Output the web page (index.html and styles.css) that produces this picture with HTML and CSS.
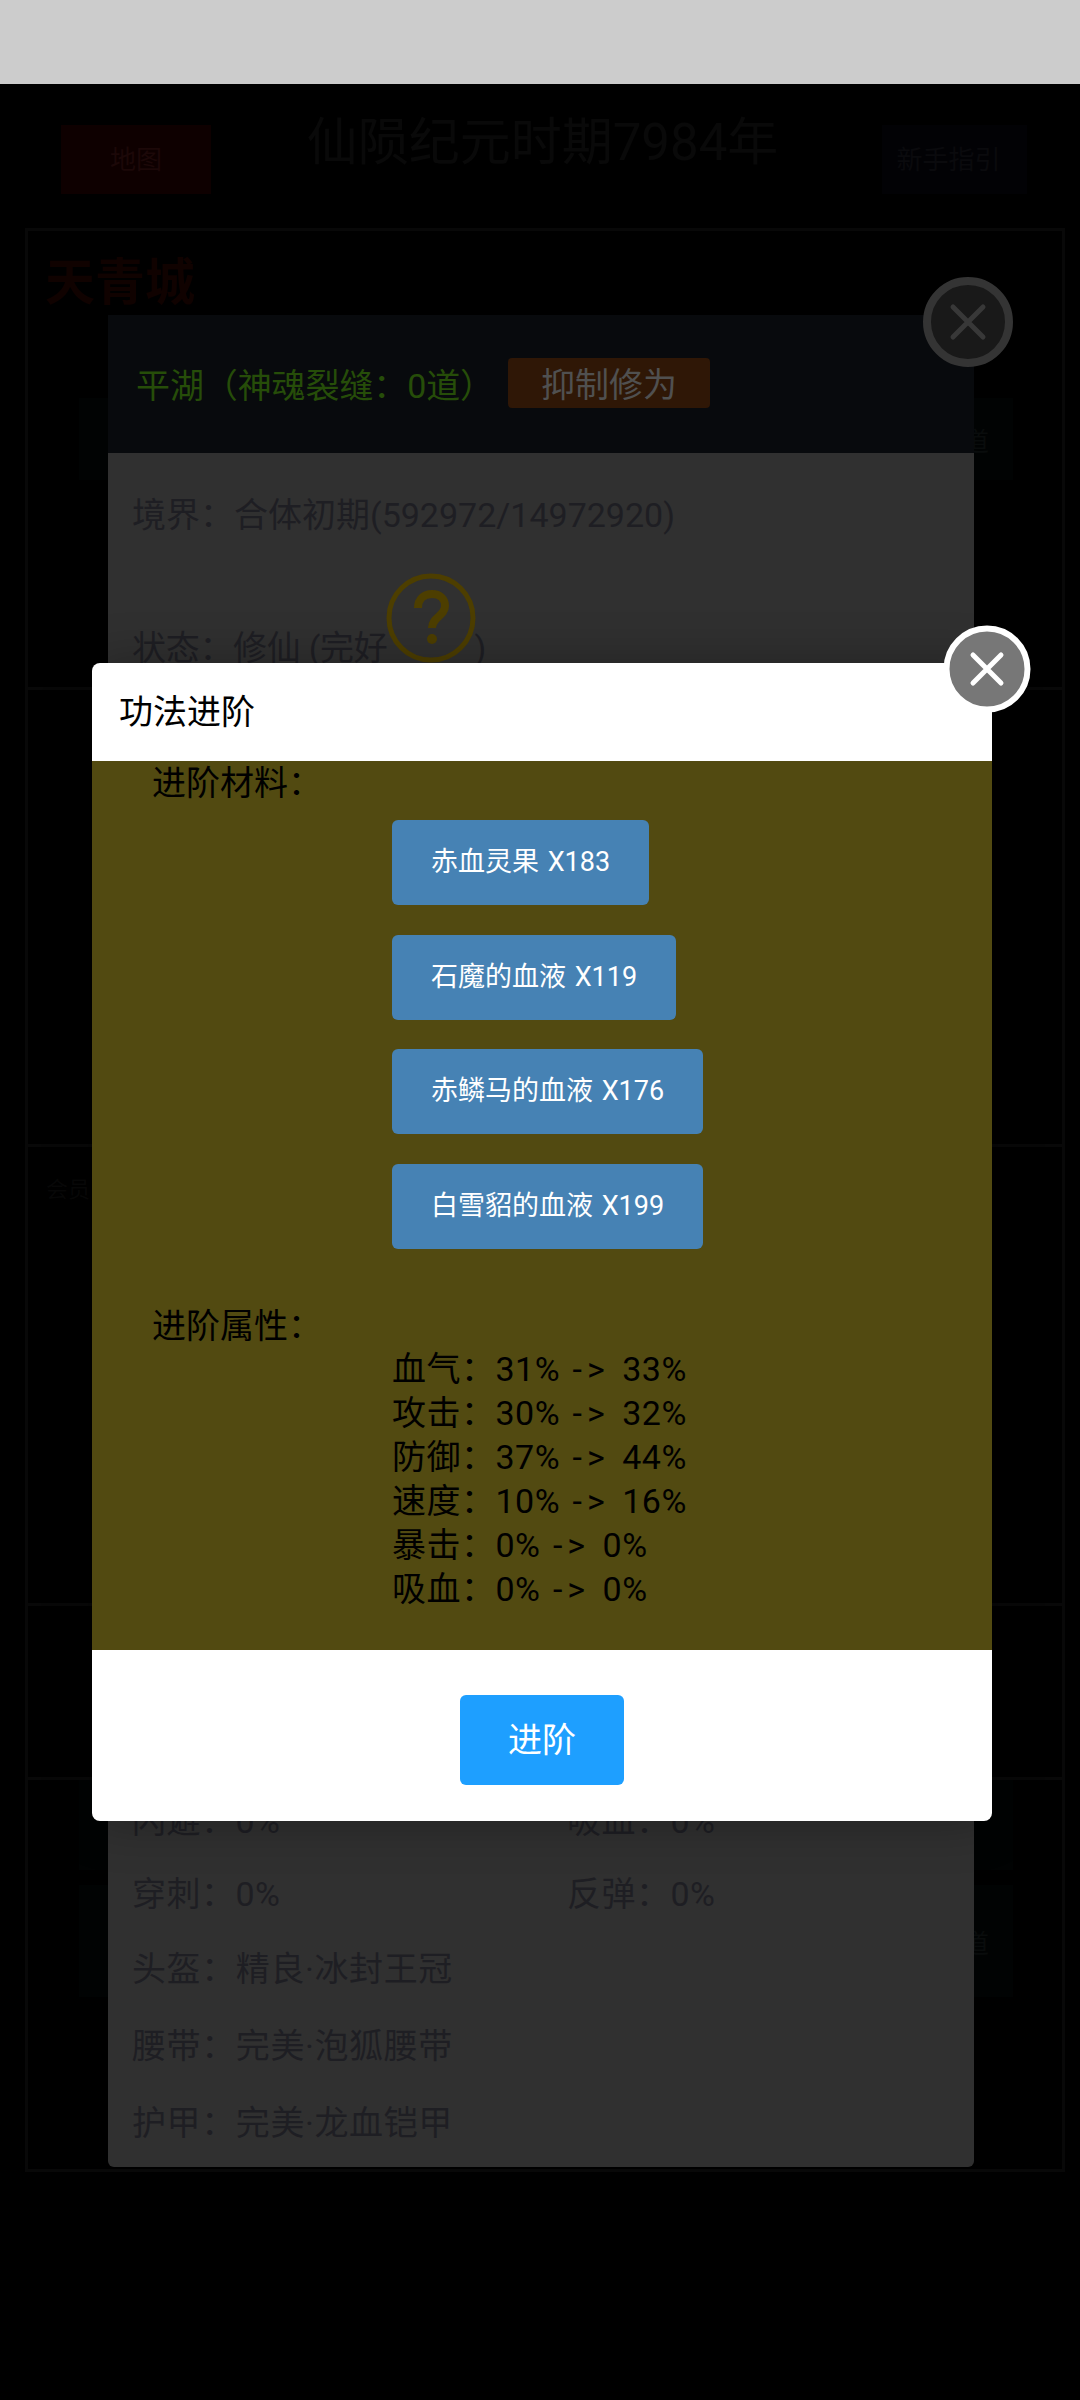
FILE: index.html
```html
<!DOCTYPE html>
<html>
  <head>
    <meta charset="utf-8">
    <title>功法进阶</title>
    <link rel="stylesheet" href="styles.css">
  </head>
  <body>
    <div class="statusbar"></div>

    <!-- Game page, dimmed by the popups -->
    <div class="topbar">
      <button class="map-btn">地图</button>
      <div class="era">仙陨纪元时期7984年</div>
      <button class="guide-btn">新手指引</button>
    </div>

    <div class="world">
      <section class="block block-city">
        <h2 class="city">天青城</h2>
        <div class="strip strip-first"><span>道</span></div>
      </section>
      <section class="block block-a"></section>
      <section class="block block-b"><p class="faint">会员</p></section>
      <section class="block block-c"></section>
      <section class="block block-d">
        <div class="strip strip-low"></div>
        <div class="strip strip-lower"><span>道</span></div>
      </section>
    </div>

    <!-- Character popup -->
    <div class="role">
      <div class="role-head">
        <span class="role-name">平湖（神魂裂缝：0道）</span>
        <button class="role-btn">抑制修为</button>
      </div>
      <div class="role-body">
        <div class="row row-first">境界：合体初期(592972/14972920)</div>
        <div class="row row-state">
          <span>状态：修仙 (完好</span>
          <svg class="help" viewBox="0 0 90 90">
            <circle cx="45" cy="45" r="42" fill="none" stroke="#4d3e00" stroke-width="5"/>
            <path d="M32 35c0-9 6-14 14-14s13 5 13 12c0 10-13 11-13 22" fill="none" stroke="#4d3e00" stroke-width="8"/>
            <circle cx="46" cy="66" r="5" fill="#4d3e00"/>
          </svg>
          <span>)</span>
        </div>
        <div class="pairs">
          <div class="row">闪避：0%</div>
          <div class="row">吸血：0%</div>
          <div class="row">穿刺：0%</div>
          <div class="row">反弹：0%</div>
        </div>
        <div class="row row-gear">头盔：精良·冰封王冠</div>
        <div class="row row-gear">腰带：完美·泡狐腰带</div>
        <div class="row row-gear">护甲：完美·龙血铠甲</div>
      </div>
      <svg class="role-close" viewBox="0 0 90 90">
        <circle cx="45" cy="45" r="41" fill="#191919" stroke="#343434" stroke-width="8"/>
        <path d="M30 30l30 30M60 30L30 60" stroke="#383838" stroke-width="5" stroke-linecap="round"/>
      </svg>
    </div>

    <!-- Upgrade popup -->
    <div class="layer">
      <div class="layer-title">功法进阶</div>
      <div class="layer-body">
        <div class="label">进阶材料：</div>
        <div class="materials">
          <button class="material">赤血灵果 X183</button>
          <button class="material">石魔的血液 X119</button>
          <button class="material">赤鳞马的血液 X176</button>
          <button class="material">白雪貂的血液 X199</button>
        </div>
        <div class="label label-attrs">进阶属性：</div>
        <ul class="attrs">
          <li>血气：31% <span class="arrow">-&gt;</span> 33%</li>
          <li>攻击：30% <span class="arrow">-&gt;</span> 32%</li>
          <li>防御：37% <span class="arrow">-&gt;</span> 44%</li>
          <li>速度：10% <span class="arrow">-&gt;</span> 16%</li>
          <li>暴击：0% <span class="arrow">-&gt;</span> 0%</li>
          <li>吸血：0% <span class="arrow">-&gt;</span> 0%</li>
        </ul>
      </div>
      <div class="layer-foot">
        <button class="upgrade">进阶</button>
      </div>
      <svg class="layer-close" viewBox="0 0 88 88">
        <circle cx="44" cy="44" r="40.5" fill="#777" stroke="#fff" stroke-width="6"/>
        <path d="M30 30l28 28M58 30L30 58" stroke="#fff" stroke-width="5" stroke-linecap="round"/>
      </svg>
    </div>
  </body>
</html>
```

FILE: styles.css
```css
* {
  box-sizing: border-box;
}

html,
body {
  margin: 0;
  height: 2400px;
  overflow: hidden;
}

body {
  position: relative;
  background-color: #000;
  font-family: Roboto, "Noto Sans CJK SC", sans-serif;
}

button {
  border: 0;
  font-family: inherit;
  padding: 0;
}

.statusbar {
  height: 84px;
  background-color: #ccc;
}

/* Page behind the popups */
.topbar {
  display: flex;
  justify-content: space-between;
  align-items: flex-start;
  height: 144px;
  padding: 41px 53px 0 61px;
}

.map-btn {
  width: 150px;
  height: 69px;
  padding-bottom: 5px;
  background-color: #0e0000;
  color: #1c0808;
  font-size: 26px;
}

.era {
  margin-top: -17px;
  margin-left: -8px;
  color: #090909;
  font-size: 51px;
  line-height: 70px;
}

.guide-btn {
  width: 145px;
  height: 69px;
  padding: 0 12px 5px 0;
  background-color: #020205;
  color: #0a0a0d;
  font-size: 26px;
}

.world {
  margin: 0 15px 0 25px;
  border: 3px solid #080808;
}

.block {
  border-bottom: 3px solid #080808;
}

.block:last-child {
  border-bottom: 0;
}

.block-city {
  height: 459px;
  padding: 22px 17px 0;
}

.block-a {
  height: 457px;
}

.block-b {
  height: 459px;
  padding: 24px 18px 0;
}

.block-c {
  height: 174px;
}

.block-d {
  height: 389px;
}

.city {
  margin: 0;
  color: #100200;
  font-size: 50px;
  font-weight: 700;
  line-height: 60px;
}

.faint {
  margin: 0;
  color: #080808;
  font-size: 22px;
}

.strip {
  display: flex;
  justify-content: flex-end;
  align-items: center;
  width: 934px;
  padding-right: 24px;
  background-color: #010303;
  color: #090c0c;
  font-size: 26px;
}

.strip-first {
  height: 82px;
  margin: 85px 0 0 34px;
}

.strip-low {
  height: 90px;
  margin-left: 51px;
}

.strip-lower {
  height: 112px;
  margin: 15px 0 0 51px;
}

/* Character popup */
.role {
  position: absolute;
  top: 315px;
  left: 108px;
  width: 866px;
  height: 1852px;
  background-color: #303030;
  border-radius: 0 0 6px 6px;
}

.role-head {
  display: flex;
  align-items: center;
  height: 138px;
  padding: 0 0 2px 28px;
  background-color: #080a0d;
}

.role-name {
  color: #264d09;
  font-size: 34px;
  letter-spacing: -0.1px;
}

.role-btn {
  width: 202px;
  height: 50px;
  margin-left: 14px;
  padding-bottom: 2px;
  background-color: #2f1706;
  border-radius: 4px;
  color: #505050;
  font-size: 34px;
}

.role-body {
  padding-left: 24px;
  color: #1e1e23;
  font-size: 34px;
}

.row {
  height: 76px;
  line-height: 76px;
}

.row-first {
  margin-top: 24px;
}

.row-state {
  display: flex;
  align-items: center;
  margin-top: 57px;
  letter-spacing: -0.3px;
  white-space: pre;
}

/* sits above the text line it belongs to */
.help {
  flex: none;
  width: 90px;
  height: 90px;
  margin: 0 -2px 60px -1px;
}

.pairs {
  display: grid;
  grid-template-columns: 435px 1fr;
  margin-top: 1099px;
  letter-spacing: 0.5px;
}

.pairs .row {
  height: 73px;
  line-height: 73px;
}

.row-gear {
  height: 77px;
  letter-spacing: 0.6px;
  line-height: 77px;
}

.role-close {
  position: absolute;
  top: -38px;
  left: 815px;
  width: 90px;
  height: 90px;
}

/* Upgrade popup */
.layer {
  position: absolute;
  top: 663px;
  left: 92px;
  width: 900px;
  background-color: #fff;
  border-radius: 8px;
  box-shadow: 1px 1px 50px rgba(0, 0, 0, 0.3);
}

.layer-title {
  height: 98px;
  padding-left: 27px;
  color: #000;
  font-size: 34px;
  line-height: 98px;
}

.layer-body {
  padding: 0 0 39px 60px;
  background-color: #524a11;
  color: #000;
}

.label {
  font-size: 34px;
  line-height: 44px;
}

.label-attrs {
  margin-top: 55px;
}

.materials {
  display: flex;
  flex-direction: column;
  align-items: flex-start;
  gap: 29.5px;
  margin: 15px 0 0 240px;
}

.material {
  height: 85px;
  padding: 0 39px 6px;
  background-color: #4682b4;
  border-radius: 6px;
  color: #fff;
  font-size: 27px;
  word-spacing: 2px;
}

.attrs {
  margin: -1px 0 0 240px;
  padding: 0;
  list-style: none;
  font-size: 34px;
  letter-spacing: 0.5px;
  line-height: 44px;
  word-spacing: 3.5px;
}

.arrow {
  letter-spacing: 5px;
}

.layer-foot {
  display: flex;
  justify-content: center;
  height: 171px;
  padding-top: 45px;
}

.upgrade {
  width: 164px;
  height: 90px;
  padding-bottom: 5px;
  background-color: #1e9fff;
  border-radius: 6px;
  color: #fff;
  font-size: 34px;
}

.layer-close {
  position: absolute;
  top: -38px;
  left: 851px;
  width: 88px;
  height: 88px;
}
```
